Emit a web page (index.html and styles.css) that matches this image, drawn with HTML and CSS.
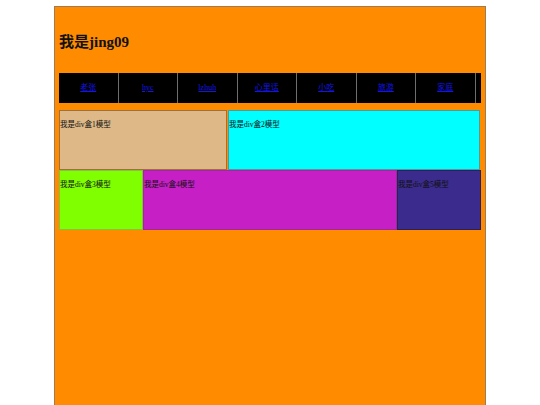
FILE: index.html
```html
<!DOCTYPE html>
<html lang="zh">
<head>
<meta charset="utf-8">
<title>我是jing09</title>
<link rel="stylesheet" href="styles.css">
</head>
<body>
<div class="page">
  <h1 class="title">我是jing09</h1>
  <ul class="nav">
    <li><a href="#">老张</a></li>
    <li><a href="#">hyc</a></li>
    <li><a href="#">lzhuh</a></li>
    <li><a href="#">心里话</a></li>
    <li><a href="#">小吃</a></li>
    <li><a href="#">旅游</a></li>
    <li><a href="#">家庭</a></li>
  </ul>
  <div class="row">
    <div class="box box1"><p>我是div盒1模型</p></div>
    <div class="box box2"><p>我是div盒2模型</p></div>
  </div>
  <div class="row">
    <div class="box box3"><p>我是div盒3模型</p></div>
    <div class="box box4"><p>我是div盒4模型</p></div>
    <div class="box box5"><p>我是div盒5模型</p></div>
  </div>
</div>
</body>
</html>
```
FILE: styles.css
```css
html, body {
  margin: 0;
  padding: 0;
  background: #ffffff;
  font-family: "Liberation Serif", "Noto Sans CJK SC", serif;
}

.page {
  width: 422px;
  min-height: 390px;
  margin: 6px auto 0;
  padding: 4px;
  border: 1px solid #a07a55;
  border-bottom: 0;
  background: #ff8c00;
}

.title {
  margin: 22px 0 22px;
  font-size: 15px;
  line-height: 18px;
  font-weight: bold;
  color: #111;
}

.nav {
  display: flex;
  margin: 0;
  padding: 0;
  list-style: none;
  height: 30px;
  background: #000000;
}

.nav li {
  width: 58.5px;
  border-right: 1px solid #6e6e6e;
  text-align: center;
  line-height: 30px;
  font-size: 8px;
}

.nav a {
  color: #1414e6;
  text-decoration: underline;
}

.row {
  display: flex;
}

.nav + .row {
  margin-top: 7px;
}

.box {
  box-sizing: border-box;
  height: 60px;
  border: 1px solid rgba(0, 0, 0, 0.3);
  font-size: 7.5px;
  color: #111;
}

.box p {
  margin: 9px 0;
  line-height: 10px;
}

.box1 {
  width: 168px;
  margin-right: 1px;
  background: #deb887;
  border-color: #a0703c;
}

.box2 {
  width: 252px;
  background: #00ffff;
  border-color: #4f9a9a;
}

.box3 {
  width: 84px;
  background: #7fff00;
  border-color: #86c23a;
}

.box4 {
  width: 254px;
  background: #c71fc6;
  border-color: #9c2a9a;
}

.box5 {
  width: 84px;
  background: #3b2b8d;
  border-color: #2a2060;
}
```
